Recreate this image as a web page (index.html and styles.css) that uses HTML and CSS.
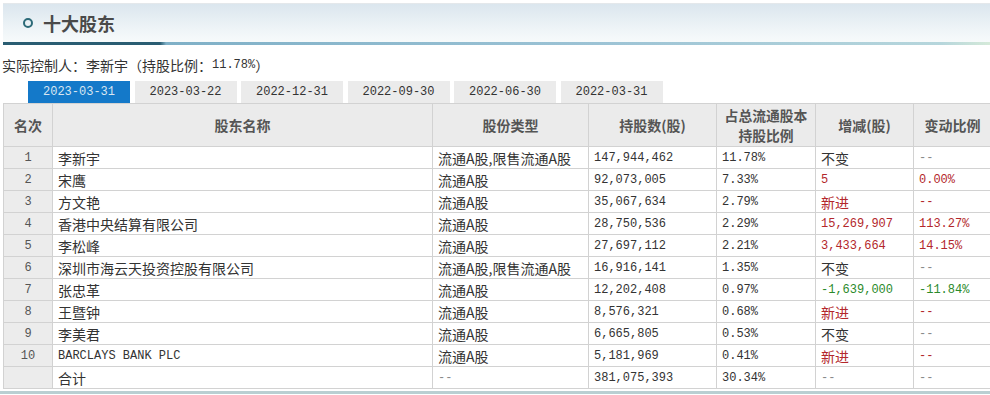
FILE: index.html
```html
<!DOCTYPE html>
<html lang="zh-CN">
<head>
<meta charset="utf-8">
<title>十大股东</title>
<link rel="stylesheet" href="styles.css">
</head>
<body>
<div class="panel">
  <div class="title-bar">
    <span class="ring"></span>
    <h2 class="title">十大股东</h2>
  </div>
  <p class="controller">实际控制人：李新宇（持股比例：<span class="n">11.78%</span>）</p>
  <ul class="tabs">
    <li class="tab active">2023-03-31</li>
    <li class="tab">2023-03-22</li>
    <li class="tab">2022-12-31</li>
    <li class="tab">2022-09-30</li>
    <li class="tab">2022-06-30</li>
    <li class="tab">2022-03-31</li>
  </ul>
  <table class="holders">
    <colgroup>
      <col class="c-rank"><col class="c-name"><col class="c-type"><col class="c-qty"><col class="c-pct"><col class="c-chg"><col class="c-ratio">
    </colgroup>
    <thead>
      <tr>
        <th>名次</th><th>股东名称</th><th>股份类型</th><th>持股数(股)</th><th class="twoline"><span class="two">占总流通股本</span><span class="two">持股比例</span></th><th>增减(股)</th><th>变动比例</th>
      </tr>
    </thead>
    <tbody>
      <tr><td class="rank">1</td><td>李新宇</td><td>流通A股,限售流通A股</td><td class="n">147,944,462</td><td class="n">11.78%</td><td>不变</td><td class="n dash">--</td></tr>
      <tr><td class="rank">2</td><td>宋鹰</td><td>流通A股</td><td class="n">92,073,005</td><td class="n">7.33%</td><td class="n up">5</td><td class="n up">0.00%</td></tr>
      <tr><td class="rank">3</td><td>方文艳</td><td>流通A股</td><td class="n">35,067,634</td><td class="n">2.79%</td><td class="up">新进</td><td class="n up">--</td></tr>
      <tr><td class="rank">4</td><td>香港中央结算有限公司</td><td>流通A股</td><td class="n">28,750,536</td><td class="n">2.29%</td><td class="n up">15,269,907</td><td class="n up">113.27%</td></tr>
      <tr><td class="rank">5</td><td>李松峰</td><td>流通A股</td><td class="n">27,697,112</td><td class="n">2.21%</td><td class="n up">3,433,664</td><td class="n up">14.15%</td></tr>
      <tr><td class="rank">6</td><td>深圳市海云天投资控股有限公司</td><td>流通A股,限售流通A股</td><td class="n">16,916,141</td><td class="n">1.35%</td><td>不变</td><td class="n dash">--</td></tr>
      <tr><td class="rank">7</td><td>张忠革</td><td>流通A股</td><td class="n">12,202,408</td><td class="n">0.97%</td><td class="n down">-1,639,000</td><td class="n down">-11.84%</td></tr>
      <tr><td class="rank">8</td><td>王暨钟</td><td>流通A股</td><td class="n">8,576,321</td><td class="n">0.68%</td><td class="up">新进</td><td class="n up">--</td></tr>
      <tr><td class="rank">9</td><td>李美君</td><td>流通A股</td><td class="n">6,665,805</td><td class="n">0.53%</td><td>不变</td><td class="n dash">--</td></tr>
      <tr><td class="rank">10</td><td class="n">BARCLAYS BANK PLC</td><td>流通A股</td><td class="n">5,181,969</td><td class="n">0.41%</td><td class="up">新进</td><td class="n up">--</td></tr>
      <tr><td class="rank"></td><td>合计</td><td class="n dash">--</td><td class="n">381,075,393</td><td class="n">30.34%</td><td class="n dash">--</td><td class="n dash">--</td></tr>
    </tbody>
  </table>
  <div class="foot-line"></div>
</div>
</body>
</html>
```

FILE: styles.css
```css
* { box-sizing: border-box; }
html, body { margin: 0; padding: 0; background: #fff; }
body {
  font-family: "Noto Sans CJK SC", "Liberation Sans", sans-serif;
  font-size: 14px;
  color: #333;
  width: 990px;
  overflow: hidden;
}
.panel { padding-top: 3px; }

.title-bar {
  position: relative;
  margin-left: 3px;
  height: 42px;
  border-top: 1px solid #e4e8eb;
  background: linear-gradient(#dbe6ee, #eef4f7 60%, #f9fcfc);
  display: flex;
  align-items: center;
  padding-left: 20px;
  padding-bottom: 3px;
}
.title-bar::after {
  content: "";
  position: absolute;
  left: 0; right: 0; bottom: 0;
  height: 3px;
  background: linear-gradient(to right, #2a5d72 0, #2a5d72 157px, #7fb0c7 163px, #9cc3d5 60%, #b6d6dc 95%, #d5ead9 100%);
}
.ring {
  width: 10px; height: 10px;
  border: 2px solid #2c6a78;
  border-radius: 50%;
  margin-right: 10px;
}
.title {
  margin: 0;
  font-size: 18px;
  font-weight: 700;
  color: #4a4a4a;
  line-height: 20px;
}

.controller {
  margin: 12px 0 0 2px;
  height: 16px;
  line-height: 16px;
  font-size: 14px;
  color: #333;
  display: flex;
  align-items: center;
}
.n {
  font-family: "Liberation Mono", monospace;
  font-size: 12px;
}

.tabs {
  list-style: none;
  margin: 8px 0 0 28px;
  padding: 0;
  display: flex;
  gap: 4.5px;
}
.tab {
  width: 102px;
  height: 22px;
  line-height: 22px;
  text-align: center;
  background: #ebebeb;
  color: #333;
  font-family: "Liberation Mono", monospace;
  font-size: 12px;
}
.tab.active {
  background: #1479c9;
  color: #d9e6f1;
}

.holders {
  margin-left: 3px;
  width: 988px;
  border-collapse: collapse;
  table-layout: fixed;
}
.c-rank { width: 49px; }
.c-name { width: 380px; }
.c-type { width: 156px; }
.c-qty { width: 128px; }
.c-pct { width: 99px; }
.c-chg { width: 98px; }
.c-ratio { width: 78px; }

.holders th, .holders td {
  border: 1px solid #d2d2d2;
}
.holders th {
  height: 43px;
  background: #ebebeb;
  color: #555;
  font-weight: 700;
  font-size: 14px;
  line-height: 20px;
  padding: 0;
  text-align: center;
}
.holders th.twoline { font-size: 13.8px; line-height: 20.4px; }
.holders th .two { display: block; }
.holders td {
  height: 22px;
  padding: 0 4px 0 5px;
  line-height: 20px;
  white-space: nowrap;
  overflow: hidden;
  color: #333;
}
.holders td.n { padding-top: 1px; }
.holders td.rank {
  background: #ececec;
  text-align: center;
  padding: 1px 0 0;
  font-family: "Liberation Mono", monospace;
  font-size: 12px;
  color: #555;
}
.holders td.up { color: #b3272b; }
.holders td.down { color: #2b8a2b; }
.holders td.dash { color: #8a8a8a; }

.foot-line {
  margin-top: 2px;
  height: 3px;
  background: #b9cfd2;
}
```
